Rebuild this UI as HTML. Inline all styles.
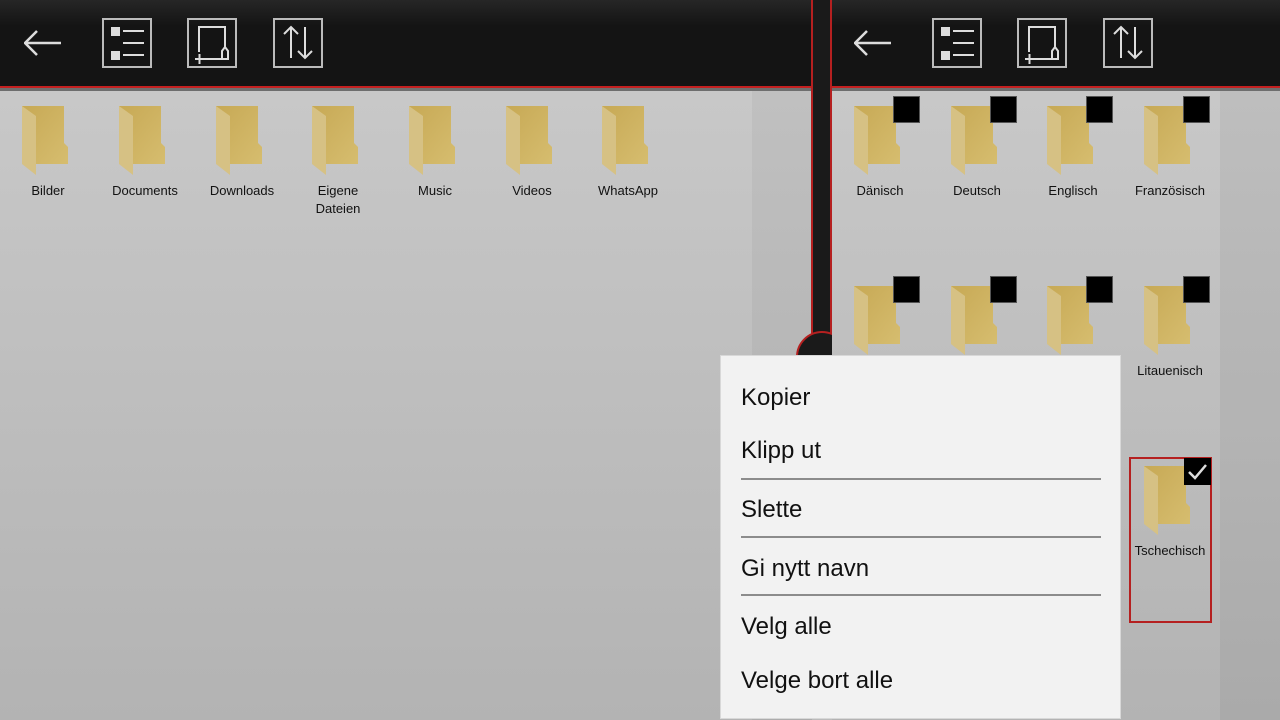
<!DOCTYPE html>
<html><head><meta charset="utf-8">
<style>
*{margin:0;padding:0;box-sizing:border-box}
body{width:1280px;height:720px;overflow:hidden;position:relative;font-family:"Liberation Sans",sans-serif;background:#bbb}
.abs{position:absolute}
.hdr{top:0;height:86px;background:linear-gradient(#262626,#141414 30%,#141414)}
.redl{height:2px;background:#c42020}
.gl{height:3px;background:#6e6e6e}
.content{background:linear-gradient(#c8c8c8,#b3b3b3)}
.lbl{position:absolute;width:96px;text-align:center;font-size:13px;color:#111;line-height:18px}
.chk{position:absolute;width:27px;height:27px;background:#000;border:1px solid #555}
.menu{left:720px;top:355px;width:401px;height:364px;background:#f2f2f2;border:1px solid #d8d8d8}
.mi{position:absolute;left:20px;font-size:24px;color:#111;line-height:28px}
.sep{position:absolute;left:20px;width:360px;height:2px;background:#8c8c8c}
</style></head><body>
<svg width="0" height="0" style="position:absolute">
<defs>
<linearGradient id="bk" x1="0" y1="0" x2="1" y2="1"><stop offset="0" stop-color="#c7a955"/><stop offset="1" stop-color="#d6bd6f"/></linearGradient>
<symbol id="fold" viewBox="0 0 46 70">
<path d="M0 0H42V37L46 41V58H14Z" fill="url(#bk)"/>
<path d="M0 0L14 10V69L0 58Z" fill="#d6c184"/>
</symbol>
<symbol id="tb" viewBox="0 0 330 50">
<path d="M1 25H37M13 13L1 25L13 37" stroke="#ddd" stroke-width="2.5" fill="none"/>
<rect x="79" y="1" width="48" height="48" stroke="#bbb" stroke-width="2" fill="none"/>
<rect x="87" y="9" width="9" height="9" fill="#ddd"/><rect x="87" y="33" width="9" height="9" fill="#ddd"/>
<path d="M99 13H120M99 25H120M99 37H120" stroke="#ddd" stroke-width="2"/>
<rect x="164" y="1" width="48" height="48" stroke="#bbb" stroke-width="2" fill="none"/>
<path d="M175 34V9H201V30M175 41H201M171 41H180M175.5 36V46M198 41V33L201 29L204 33V41Z" stroke="#ddd" stroke-width="2" fill="none"/>
<rect x="250" y="1" width="48" height="48" stroke="#bbb" stroke-width="2" fill="none"/>
<path d="M267 40V9M260 16L267 9L274 16M281 9V40M274 33L281 40L288 33" stroke="#ddd" stroke-width="2" fill="none"/>
</symbol>
</defs></svg>

<!-- left panel -->
<div class="abs hdr" style="left:0;width:812px"></div>
<div class="abs redl" style="left:0;top:86px;width:812px"></div>
<div class="abs gl" style="left:0;top:88px;width:812px"></div>
<div class="abs content" style="left:0;top:91px;width:752px;height:629px"></div>
<div class="abs content" style="left:752px;top:91px;width:60px;height:629px;filter:brightness(.96)"></div>
<svg class="abs" style="left:24px;top:17px" width="330" height="52"><use href="#tb"/></svg>

<!-- divider -->
<div class="abs" style="left:811px;top:0;width:21px;height:360px;background:#1a1a1a;border-left:2px solid #b52020;border-right:2px solid #b52020"></div>
<div class="abs" style="left:796px;top:331px;width:52px;height:52px;border-radius:50%;background:#1a1a1a;border:2px solid #b52020"></div>

<!-- right panel -->
<div class="abs hdr" style="left:832px;width:448px"></div>
<div class="abs redl" style="left:832px;top:86px;width:448px"></div>
<div class="abs gl" style="left:832px;top:88px;width:448px"></div>
<div class="abs content" style="left:832px;top:91px;width:388px;height:629px"></div>
<div class="abs content" style="left:1220px;top:91px;width:60px;height:629px;filter:brightness(.95)"></div>
<svg class="abs" style="left:854px;top:17px" width="330" height="52"><use href="#tb"/></svg>

<!-- left folders -->
<svg class="abs" style="left:22px;top:106px" width="46" height="70"><use href="#fold"/></svg>
<svg class="abs" style="left:119px;top:106px" width="46" height="70"><use href="#fold"/></svg>
<svg class="abs" style="left:216px;top:106px" width="46" height="70"><use href="#fold"/></svg>
<svg class="abs" style="left:312px;top:106px" width="46" height="70"><use href="#fold"/></svg>
<svg class="abs" style="left:409px;top:106px" width="46" height="70"><use href="#fold"/></svg>
<svg class="abs" style="left:506px;top:106px" width="46" height="70"><use href="#fold"/></svg>
<svg class="abs" style="left:602px;top:106px" width="46" height="70"><use href="#fold"/></svg>
<div class="lbl" style="left:0;top:182px">Bilder</div>
<div class="lbl" style="left:97px;top:182px">Documents</div>
<div class="lbl" style="left:194px;top:182px">Downloads</div>
<div class="lbl" style="left:290px;top:182px">Eigene<br>Dateien</div>
<div class="lbl" style="left:387px;top:182px">Music</div>
<div class="lbl" style="left:484px;top:182px">Videos</div>
<div class="lbl" style="left:580px;top:182px">WhatsApp</div>

<!-- right folders row 1 -->
<svg class="abs" style="left:854px;top:106px" width="46" height="70"><use href="#fold"/></svg>
<svg class="abs" style="left:951px;top:106px" width="46" height="70"><use href="#fold"/></svg>
<svg class="abs" style="left:1047px;top:106px" width="46" height="70"><use href="#fold"/></svg>
<svg class="abs" style="left:1144px;top:106px" width="46" height="70"><use href="#fold"/></svg>
<div class="chk" style="left:893px;top:96px"></div>
<div class="chk" style="left:990px;top:96px"></div>
<div class="chk" style="left:1086px;top:96px"></div>
<div class="chk" style="left:1183px;top:96px"></div>
<div class="lbl" style="left:832px;top:182px">Dänisch</div>
<div class="lbl" style="left:929px;top:182px">Deutsch</div>
<div class="lbl" style="left:1025px;top:182px">Englisch</div>
<div class="lbl" style="left:1122px;top:182px">Französisch</div>

<!-- row 2 -->
<svg class="abs" style="left:854px;top:286px" width="46" height="70"><use href="#fold"/></svg>
<svg class="abs" style="left:951px;top:286px" width="46" height="70"><use href="#fold"/></svg>
<svg class="abs" style="left:1047px;top:286px" width="46" height="70"><use href="#fold"/></svg>
<svg class="abs" style="left:1144px;top:286px" width="46" height="70"><use href="#fold"/></svg>
<div class="chk" style="left:893px;top:276px"></div>
<div class="chk" style="left:990px;top:276px"></div>
<div class="chk" style="left:1086px;top:276px"></div>
<div class="chk" style="left:1183px;top:276px"></div>
<div class="lbl" style="left:1122px;top:362px">Litauenisch</div>

<!-- row 3 selected -->
<div class="abs" style="left:1129px;top:457px;width:83px;height:166px;border:2px solid #b52020"></div>
<svg class="abs" style="left:1144px;top:466px" width="46" height="70"><use href="#fold"/></svg>
<div class="abs" style="left:1184px;top:458px;width:27px;height:27px;background:#000"><svg width="27" height="27"><path d="M5 14L11 20L22 7" stroke="#ddd" stroke-width="2.5" fill="none"/></svg></div>
<div class="lbl" style="left:1122px;top:542px">Tschechisch</div>

<!-- menu -->
<div class="abs menu">
<div class="mi" style="top:28px">Kopier</div>
<div class="mi" style="top:81px">Klipp ut</div>
<div class="sep" style="top:122px"></div>
<div class="mi" style="top:140px">Slette</div>
<div class="sep" style="top:180px"></div>
<div class="mi" style="top:199px">Gi nytt navn</div>
<div class="sep" style="top:238px"></div>
<div class="mi" style="top:257px">Velg alle</div>
<div class="mi" style="top:311px">Velge bort alle</div>
</div>
</body></html>
